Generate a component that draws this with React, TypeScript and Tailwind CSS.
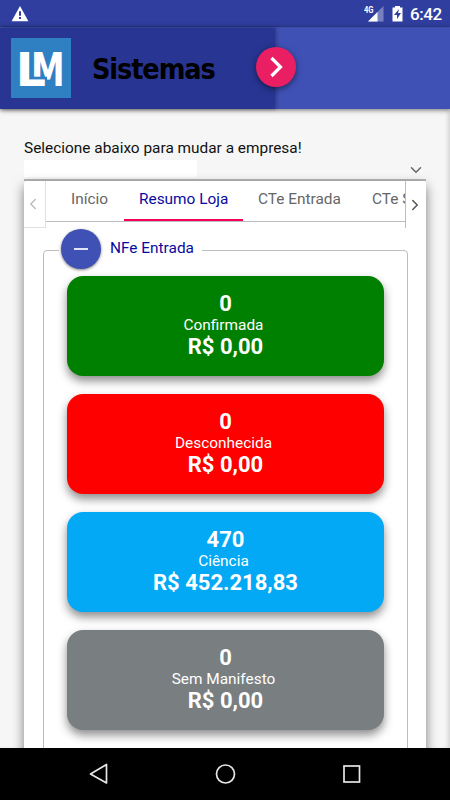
import { ChevronDown, ChevronLeft, ChevronRight } from 'lucide-react';

const TABS = [
  { label: 'Início', className: 'w-[78px] pl-[25px] text-[#666]' },
  {
    label: 'Resumo Loja',
    className: 'w-[119px] pl-[15px] text-[#0909a0] border-b-[2px] border-[#f50057]',
  },
  { label: 'CTe Entrada', className: 'w-[114px] pl-[15px] text-[#666]' },
  { label: 'CTe Saída', className: 'w-[114px] pl-[15px] text-[#666]' },
];

const CARDS = [
  { count: '0', label: 'Confirmada', value: 'R$ 0,00', color: 'bg-[#008000]' },
  { count: '0', label: 'Desconhecida', value: 'R$ 0,00', color: 'bg-[#ff0000]' },
  { count: '470', label: 'Ciência', value: 'R$ 452.218,83', color: 'bg-[#03a9f4]' },
  { count: '0', label: 'Sem Manifesto', value: 'R$ 0,00', color: 'bg-[#797e81]' },
];

function StatusBar() {
  return (
    <div className="h-[27px] shrink-0 bg-[#303f9f] flex items-center justify-between pl-[11px] pr-[9px] text-white">
      <svg width="18" height="16" viewBox="0 0 18 16" className="mt-px">
        <path d="M9 0 17.4 15.3H.6Z" fill="#fff" />
        <path d="M8 5.3h2v4.5H8zM8 11h2v2H8z" fill="#303f9f" />
      </svg>
      <div className="flex items-center">
        <svg width="39" height="18" viewBox="0 0 39 18" className="mt-[2px] mr-[7px]">
          <path d="M19.500 0v15.500H4z" fill="#7781c0" />
          <path d="M13.500 6v9.500H4z" fill="#fff" />
          <path d="M-1-1h11.500v9H-1z" fill="#303f9f" />
          <text
            x="0"
            y="7"
            fontSize="8.500"
            fontWeight="700"
            fill="#fff"
            textLength="9.500"
            lengthAdjust="spacingAndGlyphs"
          >
            4G
          </text>
          <path d="M31 0h5v1.500h2.500v14h-10v-14H31z" fill="#fff" />
          <path d="m35 3-5 6h3v4l4-6h-3z" fill="#303f9f" />
        </svg>
        <span className="text-[17px] font-medium leading-[27px] pt-px tracking-[-0.4px] w-[31px]">
          6:42
        </span>
      </div>
    </div>
  );
}

function Logo() {
  return (
    <svg width="60" height="60" viewBox="0 0 60 60" className="shrink-0">
      <rect width="60" height="60" fill="#2f7fc3" />
      <g
        fontFamily="DejaVu Sans, sans-serif"
        fontWeight="700"
        fontSize="46"
        fill="#fff"
      >
        <text transform="translate(20 47.500) scale(0.735 1)">M</text>
        <rect x="21" y="38.700" width="15" height="10" fill="#2f7fc3" />
        <text transform="translate(4.700 47.500) scale(1.030 1)">L</text>
      </g>
    </svg>
  );
}

function Header() {
  return (
    <header className="relative z-10 h-[82px] shrink-0 flex bg-[#3f51b5] border-t border-[#3c4cab] shadow-[0_1px_5px_rgba(0,0,0,0.55)]">
      <div className="w-[275px] bg-[#283593] flex items-center pl-[11px] pb-[2px] shadow-[1px_0_4px_rgba(0,0,0,0.35)]">
        <Logo />
        <span className="ml-[21px] mt-[5px] text-[28.5px] font-bold text-black tracking-[-1.1px] font-['DejaVu_Sans_Condensed','DejaVu_Sans',sans-serif] [font-stretch:condensed]">
          Sistemas
        </span>
      </div>
      <button className="relative -ml-[19px] mt-[19px] size-10 rounded-full bg-[#e91e63] flex items-center justify-center shadow-[0_2px_6px_rgba(0,0,0,0.5)]">
        <svg width="14" height="22" viewBox="0 0 14 22" fill="none">
          <path d="m2.500 2 9 9-9 9" stroke="#fff" strokeWidth="3.200" />
        </svg>
      </button>
    </header>
  );
}

function TabStrip() {
  return (
    <div className="flex h-[47px] shrink-0 text-[15.4px]">
      <div className="w-[22px] border-r border-b border-[#e0e0e0] flex items-center justify-center pr-1">
        <ChevronLeft size={18} className="text-[#bdbdbd] shrink-0" />
      </div>
      <div className="h-[41px] w-[359px] border-b border-[#bdbdbd] flex overflow-hidden">
        {TABS.map((tab) => (
          <div
            key={tab.label}
            className={`h-10 shrink-0 leading-[37px] whitespace-nowrap ${tab.className}`}
          >
            {tab.label}
          </div>
        ))}
      </div>
      <div className="flex-1 border-l border-[#bdbdbd] flex items-center justify-center pr-[2px]">
        <ChevronRight size={18} className="text-[#555] shrink-0" />
      </div>
    </div>
  );
}

function NavigationBar() {
  return (
    <nav className="relative z-10 h-[52px] shrink-0 bg-black flex items-center justify-center">
      <svg width="272" height="22" viewBox="0 0 272 22" fill="none" stroke="#e6e6e6" strokeWidth="1.700">
        <path d="M17.500 1.500v18.500L1.500 11Z" strokeLinejoin="round" />
        <circle cx="136.500" cy="11" r="9" />
        <rect x="255" y="3" width="15.500" height="16" />
      </svg>
    </nav>
  );
}

export default function App() {
  return (
    <div className="w-[450px] h-[800px] flex flex-col overflow-hidden bg-[#f6f6f6] font-[Roboto,sans-serif]">
      <StatusBar />
      <Header />
      <main className="h-[639px] shrink-0 overflow-hidden px-6 pt-[29px] flex flex-col shadow-[inset_-4px_0_4px_-2px_rgba(0,0,0,0.15)]">
        <p className="h-[22px] shrink-0 leading-[20px] text-[15.4px] text-[#111]">
          Selecione abaixo para mudar a empresa!
        </p>
        <div className="h-[21px] shrink-0 flex justify-between border-b-2 border-[#b5b5b5]">
          <div className="w-[173px] h-[17px] bg-white" />
          <ChevronDown size={18} className="text-[#666] mr-px mt-[1px]" />
        </div>
        <section className="h-[600px] shrink-0 bg-white rounded-t-[3px] shadow-[0_5px_12px_rgba(0,0,0,0.5)]">
          <TabStrip />
          <div className="mt-[22px] ml-[19px] w-[365px] h-[520px] border border-[#bdbdbd] rounded">
            <div className="-mt-[22px] ml-[15px] w-[143px] bg-white pl-[2px] flex items-center">
              <button className="size-10 rounded-full bg-[#3f51b5] flex items-center justify-center shadow-[0_1px_3px_rgba(0,0,0,0.5)]">
                <span className="w-[14px] h-[2px] bg-[#e0e4ff]" />
              </button>
              <span className="ml-[9px] text-[15.4px] text-[#0909a0]">
                NFe Entrada
              </span>
            </div>
            <div className="mt-[7px] ml-[23px] flex flex-col gap-[18px]">
              {CARDS.map((card) => (
                <article
                  key={card.label}
                  className={`w-[317px] h-[100px] rounded-[16px] pt-[16px] text-center text-white shadow-[0_5px_10px_rgba(0,0,0,0.45)] ${card.color}`}
                >
                  <div className="text-[22px] font-bold leading-[24px]">{card.count}</div>
                  <div className="text-[15.4px] leading-[19px] pr-[4px]">{card.label}</div>
                  <div className="text-[22px] font-bold leading-[23px]">{card.value}</div>
                </article>
              ))}
            </div>
          </div>
        </section>
      </main>
      <NavigationBar />
    </div>
  );
}
